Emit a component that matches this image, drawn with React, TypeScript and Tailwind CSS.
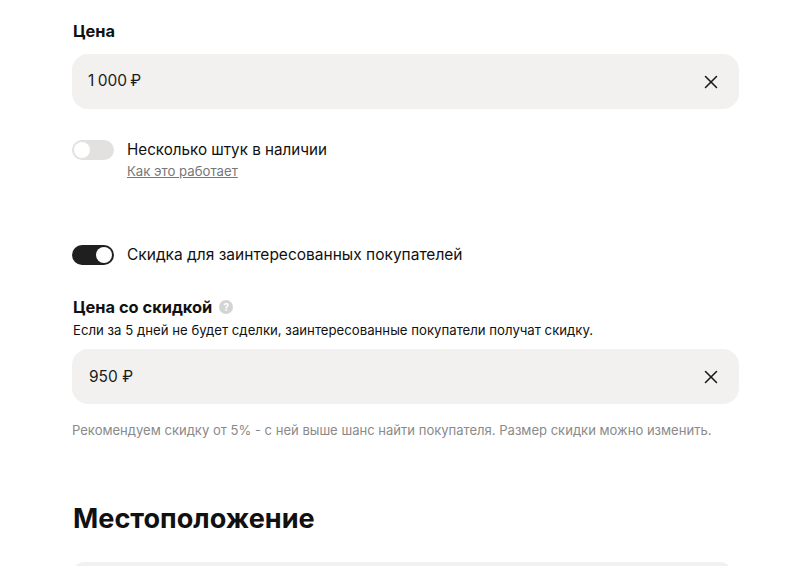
import React from 'react';
import { X } from 'lucide-react';

const PriceInput: React.FC<{ value: string; className: string }> = ({ value, className }) => (
  <div className="flex h-[55px] w-[667px] items-center justify-between rounded-[16px] bg-[#f2f1f0] pl-[16px] pr-[17px]">
    <span className={`text-[15.5px] leading-[20px] text-[#1a1a1a] ${className}`}>{value}</span>
    <X size={22} strokeWidth={1.7} className="text-[#1a1a1a]" />
  </div>
);

const Toggle: React.FC<{ on?: boolean }> = ({ on }) => (
  <div
    className={`flex h-[20px] w-[42px] shrink-0 items-center rounded-full px-[2px] ${
      on ? 'justify-end bg-[#1f1f1f]' : 'justify-start bg-[#e3e1df]'
    }`}
  >
    <div className="h-[16px] w-[16px] rounded-full bg-white" />
  </div>
);

export default function App() {
  return (
    <div className="h-[566px] w-[800px] overflow-hidden bg-white pl-[72px] font-['Inter',sans-serif] text-[#111111]">
      <div className="pl-[1px] pt-[22px] text-[16.4px] font-bold leading-[18px]">Цена</div>
      <div className="mt-[14px]">
        <PriceInput value="1 000 ₽" className="mb-[2px] [word-spacing:-1px]" />
      </div>

      <div className="mt-[31px] flex gap-[13px]">
        <Toggle />
        <div>
          <div className="text-[15.2px] leading-[20px]">Несколько штук в наличии</div>
          <a className="mt-[3px] block text-[13.2px] leading-[16px] text-[#777777] underline">Как это работает</a>
        </div>
      </div>

      <div className="mt-[66px] flex items-center gap-[13px]">
        <Toggle on />
        <span className="text-[15.5px] leading-[20px]">Скидка для заинтересованных покупателей</span>
      </div>

      <div className="mt-[33px] flex items-center gap-[7px] pl-[1px]">
        <span className="text-[16.4px] font-bold leading-[18px]">Цена со скидкой</span>
        <span className="flex h-[14px] w-[14px] items-center justify-center rounded-full bg-[#d4d4d4] text-[10px] font-bold leading-none text-white">?</span>
      </div>
      <div className="mt-[6px] pl-[1px] text-[13.2px] leading-[16px]">
        Если за 5 дней не будет сделки, заинтересованные покупатели получат скидку.
      </div>
      <div className="mt-[11px]">
        <PriceInput value="950 ₽" className="ml-[1px]" />
      </div>
      <div className="mt-[17px] text-[13.05px] leading-[18px] text-[#8a8a8a]">
        Рекомендуем скидку от 5% - с ней выше шанс найти покупателя. Размер скидки можно изменить.
      </div>

      <h2 className="mt-[64px] pl-[1px] text-[27.1px] font-bold leading-[32px]">Местоположение</h2>
      <div className="mt-[27px] h-[20px] w-[660px] rounded-t-[12px] bg-[#f1f1f0]" />
    </div>
  );
}
